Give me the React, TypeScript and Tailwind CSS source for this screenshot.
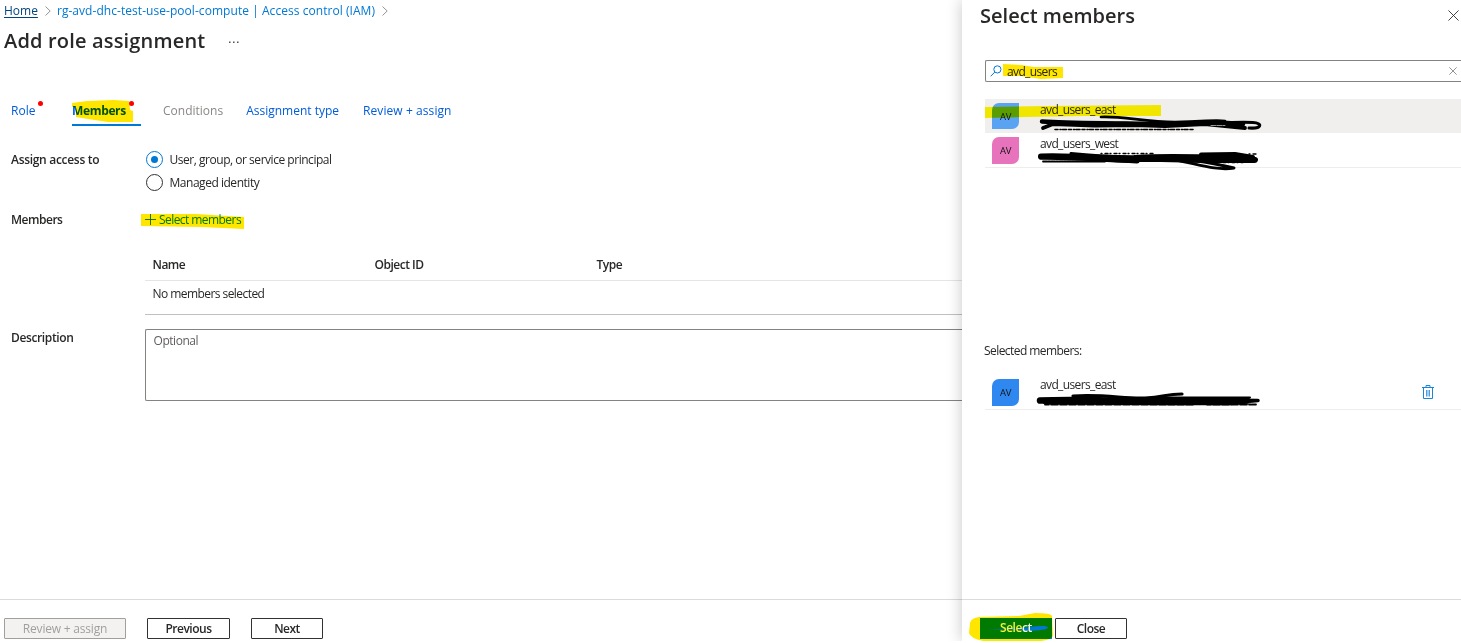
import React from "react";

type Mark = { d: string; className: string; box: string };

function Highlight({ d, className, box }: Mark) {
  return (
    <svg viewBox={box} className={`pointer-events-none absolute mix-blend-multiply ${className}`}>
      <path d={d} />
    </svg>
  );
}

function Chevron() {
  return (
    <svg viewBox="0 0 6 10" className="h-[10px] w-[6px]" fill="none" stroke="#8a8886" strokeWidth="0.9">
      <path d="M0.5 0.5 5.2 5 0.5 9.5" />
    </svg>
  );
}

function Cross({ className }: { className: string }) {
  return (
    <svg viewBox="0 0 12 12" className={className} fill="none" strokeWidth="1">
      <path d="M0.5 0.5 11.5 11.5M11.5 0.5 0.5 11.5" />
    </svg>
  );
}

function Radio({ label, checked }: { label: string; checked?: boolean }) {
  return (
    <label className="flex h-[23px] items-center">
      <span
        className={`flex size-[17px] items-center justify-center rounded-full border ${
          checked ? "border-[#0078d4]" : "border-[#323130]"
        }`}
      >
        {checked && <span className="size-[7px] rounded-full bg-[#0078d4]" />}
      </span>
      <span className="ml-[6.5px] tracking-[-0.47px]">{label}</span>
    </label>
  );
}

function Avatar({ className }: { className: string }) {
  return (
    <span
      className={`ml-[7px] flex w-[27px] shrink-0 items-center justify-center rounded-tl-[7px] rounded-br-[7px] pt-px text-[9.5px] tracking-[-0.3px] text-[#111] ${className}`}
    >
      AV
    </span>
  );
}

function Tab({ label, className }: { label: string; className: string }) {
  return <span className={`flex h-[31px] items-center ${className}`}>{label}</span>;
}

const button = "flex h-[21px] items-center justify-center rounded-[1px] border font-semibold tracking-[-0.5px]";

export default function App() {
  return (
    <div className="h-[643px] w-[1461px] bg-white">
      <div className="flex h-[641px] w-[1461px] overflow-hidden bg-white font-['Open_Sans',sans-serif] text-[12px] leading-4 text-[#292827]">
        <main className="flex w-[962px] shrink-0 flex-col">
          <nav className="flex h-[21px] items-center pl-1 text-[#0078d4]">
            <span className="mr-[7px] text-[#00457e] underline underline-offset-2">Home</span>
            <Chevron />
            <span className="mr-[7px] ml-[6px] tracking-[0.05px]">
              rg-avd-dhc-test-use-pool-compute | Access control (IAM)
            </span>
            <Chevron />
          </nav>
          <header className="flex h-[39px] items-center pl-1">
            <h1 className="text-[20px] leading-6 font-semibold tracking-[0.17px]">Add role assignment</h1>
            <span className="mb-[4px] ml-[23px] text-[12px] tracking-[0.8px]">...</span>
          </header>

          <div className="mt-[35px] flex h-[31px] pl-[11px] text-[#015cda]">
            <span className="relative w-[61px]">
              <Tab label="Role" className="" />
              <span className="absolute top-[6px] left-[27px] size-[5px] rounded-full bg-[#f00]" />
            </span>
            <span className="relative w-[69px] border-b-2 border-[#0078d4]">
              <Tab label="Members" className="font-bold tracking-[-0.35px]" />
              <Highlight
                box="0 0 62 23"
                className="top-[5px] left-0 h-[23px] w-[62px] fill-[#ffe600]"
                d="M0 3 15 1 42 0 57 1 58 10 61 11V22L36 22 16 19 4 17V7L0 7Z"
              />
              <span className="absolute top-[6px] left-[57px] size-[5px] rounded-full bg-[#f00]" />
            </span>
            <Tab label="Conditions" className="ml-[22px] text-[#8a8886]" />
            <Tab label="Assignment type" className="ml-[23px]" />
            <Tab label="Review + assign" className="ml-[24px] tracking-[0.08px]" />
          </div>

          <div className="mt-[22px] flex pl-[11px]">
            <span className="flex h-[23px] w-[135px] items-center font-semibold tracking-[-0.3px]">Assign access to</span>
            <div>
              <Radio label="User, group, or service principal" checked />
              <Radio label="Managed identity" />
            </div>
          </div>

          <div className="mt-[15px] flex h-[21px] items-center pl-[11px]">
            <span className="w-[134px] font-semibold tracking-[-0.48px]">Members</span>
            <span className="relative flex items-center text-[#0087d4]">
              <svg viewBox="0 0 11 11" className="mb-px h-[11px] w-[11px]" fill="none" stroke="#0078d4">
                <path d="M5.5 0V11M0 5.5H11" strokeWidth="0.9" />
              </svg>
              <span className="ml-[3px] tracking-[-0.56px]">Select members</span>
              <Highlight
                box="0 0 103 15"
                className="top-[2px] left-[-4px] h-[15px] w-[103px] fill-[#ffe600]"
                d="M0 0H55L103 3V15L60 13 0 12Z"
              />
            </span>
          </div>

          <div className="ml-[145px]">
            <div className="mt-[19px] grid h-[32px] grid-cols-[222px_222px_1fr] items-center border-b border-[#e6e5e4] pl-[7.5px] font-semibold tracking-[-0.5px]">
              <span>Name</span>
              <span>Object ID</span>
              <span>Type</span>
            </div>
            <div className="h-[34px] border-b border-[#c2c0be] pt-[5px] pl-[7.5px] tracking-[-0.56px]">
              No members selected
            </div>
          </div>

          <div className="mt-[14px] flex pl-[11px]">
            <span className="w-[134px] pt-px font-semibold tracking-[-0.37px]">Description</span>
            <div className="h-[72px] flex-1 rounded-l-[2px] border border-r-0 border-[#858381] pt-[3px] pl-[7.5px] tracking-[-0.45px] text-[#605e5c]">
              Optional
            </div>
          </div>

          <footer className="mt-auto flex h-[42px] items-start border-t border-[#dcdbda] pt-[18px] pl-1">
            <span className="flex h-[21px] w-[122px] items-center justify-center rounded-[1px] border border-[#a19f9d] bg-[#f3f2f1] tracking-[-0.2px] text-[#a19f9d]">
              Review + assign
            </span>
            <span className={`${button} ml-[21px] w-[83px] border-[#323130]`}>Previous</span>
            <span className={`${button} ml-[21px] w-[72px] border-[#323130]`}>Next</span>
          </footer>
        </main>

        <aside className="flex h-[641px] w-[499px] shrink-0 flex-col bg-white shadow-[-1px_0_14px_rgba(0,0,0,0.2)]">
          <header className="flex h-[31px] items-center justify-between pr-[2px] pl-[18px]">
            <h2 className="text-[20px] leading-6 font-semibold tracking-[0.02px]">Select members</h2>
            <Cross className="size-[11px] stroke-[#323130]" />
          </header>

          <div className="mt-[29px] ml-[23px] flex h-[22px] items-center rounded-l-[2px] border border-r-0 border-[#858381] pr-[4px] pl-[4px]">
            <svg viewBox="0 0 12 12" className="size-[12px]" fill="none" stroke="#0078d4" strokeWidth="1">
              <circle cx="7.4" cy="4.4" r="3.6" />
              <path d="M4.8 7.1 0.6 11.3" />
            </svg>
            <span className="relative ml-[5px] flex-1 pt-px tracking-[-0.63px]">
              avd_users
              <Highlight
                box="0 0 61 15"
                className="top-[1px] left-[-4px] h-[15px] w-[61px] fill-[#ffe600]"
                d="M0 0 18 1 31 3 60 3V14L38 15 18 12 0 12Z"
              />
            </span>
            <Cross className="size-[8px] stroke-[#605e5c]" />
          </div>

          <div className="relative mt-[17px] ml-[23px]">
            <div className="flex h-[34px] items-start bg-[#f0efee]">
              <Avatar className="mt-[4px] h-[26px] bg-[#5aa3f3]" />
              <span className="mt-[3px] ml-[21px] tracking-[-0.63px]">avd_users_east</span>
            </div>
            <div className="flex h-[35px] items-start border-b border-[#eeedec]">
              <Avatar className="mt-[4px] h-[27px] bg-[#e873bd]" />
              <span className="mt-[3px] ml-[21px] tracking-[-0.63px]">avd_users_west</span>
            </div>
            <Highlight
              box="0 0 177 13"
              className="top-[6px] left-0 h-[13px] w-[177px] fill-[#fff600]"
              d="M0 2 60 1 176 0 176 11 100 11 40 12 0 13Z"
            />
            <svg
              viewBox="0 0 230 60"
              className="absolute top-[12px] left-[50px] h-[60px] w-[230px]"
              fill="none"
              stroke="#000"
              strokeLinecap="round"
              strokeLinejoin="round"
            >
              <path d="M7 10.500C50 14 90 11 130 13S190 10 218 11.500C228 12 227 18 214 17" strokeWidth="3" />
              <path d="M7 10.500C30 12 60 12 90 12.500S140 14 165 12 195 13 208 13" strokeWidth="4.500" />
              <path d="M8 17 18 13 60 14.500 100 14 130 15 170 13 210 17" strokeWidth="3.800" />
              <path d="M66 6C88 5 110 11 140 11S180 8 190 10" strokeWidth="2.600" />
              <path d="M20 18.500H160" strokeWidth="1.600" strokeDasharray="3 2 1 1.500 4 2" />
              <path d="M176 14.500H190" stroke="#d8d8d8" strokeWidth="0.700" strokeDasharray="5 1" />
              <path d="M6 45.500C50 44 70 50 102 49L100 47C130 45 160 46 192 47S205 46 220 49L170 49 38 46" strokeWidth="6" />
              <path d="M6 46 38 47 70 48 102 50" strokeWidth="5" />
              <path d="M36 42.500C70 46 90 46 120 47S170 50 199 57C180 60 160 52 140 49" strokeWidth="3" />
              <path d="M166 43.500 200 43 218 46 190 46" strokeWidth="4" />
              <path d="M8 50.500H70" strokeWidth="1.800" strokeDasharray="4 1 2 1" />
              <path d="M66 42.500H120M184 51.500H208M214 43H221" strokeWidth="1.300" strokeDasharray="1 3 3 2" />
            </svg>
          </div>

          <div className="mt-[175px] pl-[22px] tracking-[-0.56px]">Selected members:</div>
          <div className="relative mt-[17px] ml-[23px] flex h-[34px] items-start border-b border-[#eeedec]">
            <Avatar className="mt-[3px] h-[27px] bg-[#2f88f0]" />
            <span className="mt-px ml-[21px] tracking-[-0.63px]">avd_users_east</span>
            <svg viewBox="0 0 12 14" className="mt-[9px] mr-[27px] ml-auto h-[14px] w-[12px]" fill="none" stroke="#1a86d9">
              <path d="M0 2.5H12M4 2.5V0.5H8V2.5M1.5 2.5V13.5H10.5V2.5" />
              <path d="M4.5 5V11.5M6 5V11.5M7.5 5V11.5" strokeWidth="0.8" />
            </svg>
            <svg
              viewBox="0 0 230 20"
              className="absolute top-[14px] left-[50px] h-[20px] w-[230px]"
              fill="none"
              stroke="#000"
              strokeLinecap="round"
              strokeLinejoin="round"
            >
              <path d="M5 10.500C40 9 70 11 110 10.500S180 10 212 10.500L195 12 140 12 60 11.500 10 11" strokeWidth="6.500" />
              <path d="M180 10 223 10.500 208 12" strokeWidth="3.500" />
              <path d="M38 6C70 4 90 9 110 8S130 4 147 4" strokeWidth="3.200" />
              <path d="M10 14.500H160M172 14.500H222" strokeWidth="1.800" strokeDasharray="4 2 2 1" />
              <path d="M120 7.500H215" strokeWidth="2" />
            </svg>
          </div>

          <footer className="relative mt-auto flex h-[42px] items-start border-t border-[#dcdbda] pt-[18px] pl-[18px]">
            <span className="h-[21px] w-[72px] bg-[#0087d4]" />
            <span className={`${button} ml-[3px] w-[72px] border-[#323130]`}>Close</span>
            <Highlight
              box="0 0 84 28"
              className="top-[13px] left-[7px] h-[28px] w-[84px] fill-[#ffe600]"
              d="M1 10Q2 5 10 4L50 3 66 0Q82 0 83 3L84 23Q82 27 72 28L14 28Q1 25 0 20Z"
            />
            <svg viewBox="0 0 64 8" className="absolute top-[24.5px] left-[24px] h-[8px] w-[64px]" fill="#0078d4">
              <path d="M0 4.100 35 3.600C46 1 61 0 62 2.500C62 5.500 42 6.500 30 5Z" />
            </svg>
            <span className="absolute top-[20px] left-[38px] font-semibold tracking-[-0.45px] text-[#f8f03a]">
              Sele<span className="text-[#f4fbe8]">ct</span>
            </span>
          </footer>
        </aside>
      </div>
    </div>
  );
}
